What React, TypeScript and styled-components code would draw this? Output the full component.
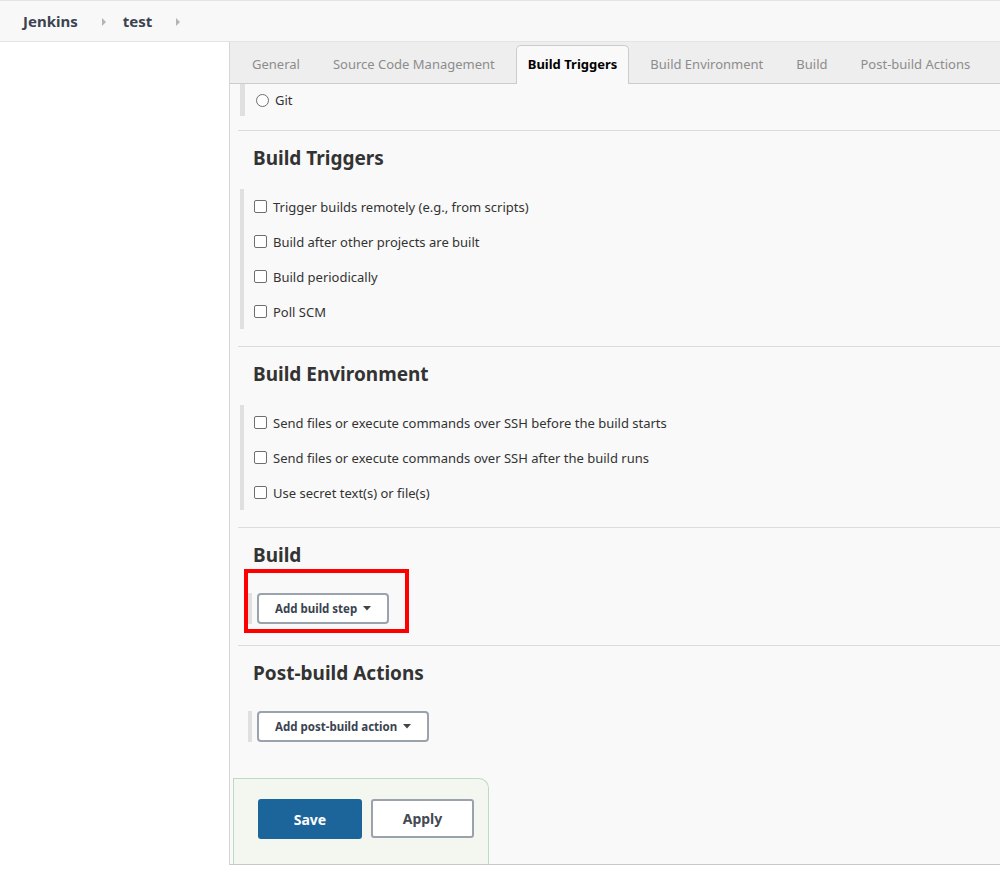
import React from 'react';
import styled, { createGlobalStyle } from 'styled-components';

const GlobalStyle = createGlobalStyle`
  html, body {
    margin: 0;
    padding: 0;
    background: #ffffff;
    font-family: "Noto Sans", "Open Sans", Arial, sans-serif;
    color: #333333;
  }
`;

const triggers = [
  'Trigger builds remotely (e.g., from scripts)',
  'Build after other projects are built',
  'Build periodically',
  'Poll SCM',
];

const environment = [
  'Send files or execute commands over SSH before the build starts',
  'Send files or execute commands over SSH after the build runs',
  'Use secret text(s) or file(s)',
];

const tabs = ['General', 'Source Code Management', 'Build Triggers', 'Build Environment', 'Build', 'Post-build Actions'];

const Caret = () => (
  <svg width="8" height="5" viewBox="0 0 8 5">
    <path d="M0 0 L8 0 L4 4.5 Z" fill="#444" />
  </svg>
);

const App: React.FC = () => {
  return (
    <>
      <GlobalStyle />
      <TopBar>
        <Crumb>Jenkins</Crumb>
        <CrumbArrow />
        <Crumb>test</Crumb>
        <CrumbArrow />
      </TopBar>

      <Page>
        <Side />
        <Main>
          <TabBar>
            {tabs.map((t) => (
              <Tab key={t} $active={t === 'Build Triggers'}>
                {t}
              </Tab>
            ))}
          </TabBar>

          <Content>
            <GitBlock>
              <Bar />
              <Radio />
              <Label>Git</Label>
            </GitBlock>

            <Section>
              <Heading>Build Triggers</Heading>
              <OptionGroup>
                {triggers.map((t) => (
                  <OptionRow key={t}>
                    <Check />
                    <Label>{t}</Label>
                  </OptionRow>
                ))}
              </OptionGroup>
            </Section>

            <Section>
              <Heading>Build Environment</Heading>
              <OptionGroup>
                {environment.map((t) => (
                  <OptionRow key={t}>
                    <Check />
                    <Label>{t}</Label>
                  </OptionRow>
                ))}
              </OptionGroup>
            </Section>

            <Section $bottom={21}>
              <Heading>Build</Heading>
              <ButtonRow>
                <Highlight />
                <DropButton>
                  Add build step <Caret />
                </DropButton>
              </ButtonRow>
            </Section>

            <Section $bottom={36}>
              <Heading>Post-build Actions</Heading>
              <ButtonRow>
                <DropButton>
                  Add post-build action <Caret />
                </DropButton>
              </ButtonRow>
            </Section>
          </Content>

          <SavePanel>
            <SaveButton>Save</SaveButton>
            <ApplyButton>Apply</ApplyButton>
          </SavePanel>
        </Main>
      </Page>
    </>
  );
};

export default App;

const TopBar = styled.div`
  height: 40px;
  display: flex;
  align-items: center;
  padding-left: 23px;
  background: #f8f8f8;
  border-top: 1px solid #e4e4e4;
  border-bottom: 1px solid #e4e4e4;
`;

const Crumb = styled.span`
  font-size: 15px;
  font-weight: 700;
  color: #3b4350;
`;

const CrumbArrow = styled.span`
  width: 0;
  height: 0;
  margin: 1px 17px 0 24px;
  border-top: 4px solid transparent;
  border-bottom: 4px solid transparent;
  border-left: 4px solid #b4b4b4;
`;

const Page = styled.div`
  display: flex;
`;

const Side = styled.div`
  width: 229px;
  flex-shrink: 0;
  background: #ffffff;
`;

const Main = styled.div`
  flex: 1;
  height: 822px;
  background: #f9f9f9;
  border-left: 1px solid #d6d6d6;
  border-bottom: 1px solid #c8c8c8;
  display: flex;
  flex-direction: column;
`;

const TabBar = styled.div`
  height: 41px;
  flex-shrink: 0;
  background: #eeeeee;
  border-bottom: 1px solid #cccccc;
  display: flex;
  align-items: flex-end;
  gap: 9px;
  padding-left: 10px;
`;

const Tab = styled.div<{ $active?: boolean }>`
  height: 39px;
  padding: 0 11px 2px 11px;
  display: flex;
  align-items: center;
  box-sizing: border-box;
  font-size: 13px;
  white-space: nowrap;
  color: ${(p) => (p.$active ? '#000000' : '#8c8c8c')};
  font-weight: ${(p) => (p.$active ? 700 : 400)};
  margin-bottom: -1px;
  border: 1px solid ${(p) => (p.$active ? '#cccccc' : 'transparent')};
  border-bottom: none;
  border-radius: 5px 5px 0 0;
  background: ${(p) => (p.$active ? '#f9f9f9' : 'transparent')};
`;

const Content = styled.div`
  padding-left: 8px;
`;

const Bar = styled.div`
  position: absolute;
  left: 2px;
  top: 0;
  bottom: 14px;
  width: 5px;
  background: #e0e0e0;
`;

const GitBlock = styled.div`
  position: relative;
  height: 32px;
  display: flex;
  align-items: center;
  padding-left: 18px;
  padding-bottom: 14px;
  border-bottom: 1px solid #dcdcdc;
`;

const Section = styled.div<{ $bottom?: number }>`
  padding: 16px 0 ${(p) => p.$bottom ?? 17}px 15px;
  border-bottom: 1px solid #dcdcdc;
  &:last-child {
    border-bottom: none;
  }
`;

const Heading = styled.h2`
  margin: 0 0 20px 0;
  font-size: 19px;
  line-height: 22px;
  font-weight: 700;
  color: #333333;
`;

const OptionGroup = styled.div`
  margin-left: -13px;
  border-left: 4px solid #e0e0e0;
  padding-left: 10px;
`;

const OptionRow = styled.div`
  height: 35px;
  display: flex;
  align-items: center;
`;

const Check = styled.span`
  width: 11px;
  height: 11px;
  border: 1px solid #6e6e6e;
  border-radius: 2px;
  background: #ffffff;
  margin-right: 6px;
  flex-shrink: 0;
`;

const Radio = styled.span`
  width: 11px;
  height: 11px;
  border: 1px solid #6e6e6e;
  border-radius: 50%;
  background: #ffffff;
  margin-right: 6px;
  flex-shrink: 0;
`;

const Label = styled.span`
  font-size: 13px;
  color: #333333;
`;

const ButtonRow = styled.div`
  position: relative;
  margin-top: 27px;
  margin-left: -5px;
  display: flex;
  border-left: 4px solid #e0e0e0;
  padding-left: 5px;
  width: max-content;
`;

const Highlight = styled.div`
  position: absolute;
  left: -8px;
  top: -24px;
  width: 157px;
  height: 56px;
  border: 4px solid #ff0000;
`;

const DropButton = styled.button`
  height: 31px;
  padding: 0 16px;
  display: flex;
  align-items: center;
  gap: 6px;
  background: #ffffff;
  border: 2px solid #9aa3ad;
  border-radius: 4px;
  font-family: "Noto Sans", "Open Sans", Arial, sans-serif;
  font-size: 11.5px;
  font-weight: 700;
  color: #3b4350;
`;

const SavePanel = styled.div`
  margin: auto 0 0 3px;
  width: 230px;
  height: 65px;
  padding: 20px 0 0 24px;
  display: flex;
  gap: 9px;
  align-items: flex-start;
  background: #f4f7f0;
  border: 1px solid #b8dcc4;
  border-bottom: none;
  border-radius: 0 10px 0 0;
`;

const SaveButton = styled.button`
  width: 104px;
  height: 40px;
  background: #1c659b;
  border: none;
  border-radius: 3px;
  color: #ffffff;
  font-family: "Noto Sans", "Open Sans", Arial, sans-serif;
  font-size: 14px;
  font-weight: 700;
`;

const ApplyButton = styled.button`
  width: 103px;
  height: 39px;
  background: #ffffff;
  border: 2px solid #9aa3ad;
  border-radius: 3px;
  color: #444a52;
  font-family: "Noto Sans", "Open Sans", Arial, sans-serif;
  font-size: 14px;
  font-weight: 700;
`;
